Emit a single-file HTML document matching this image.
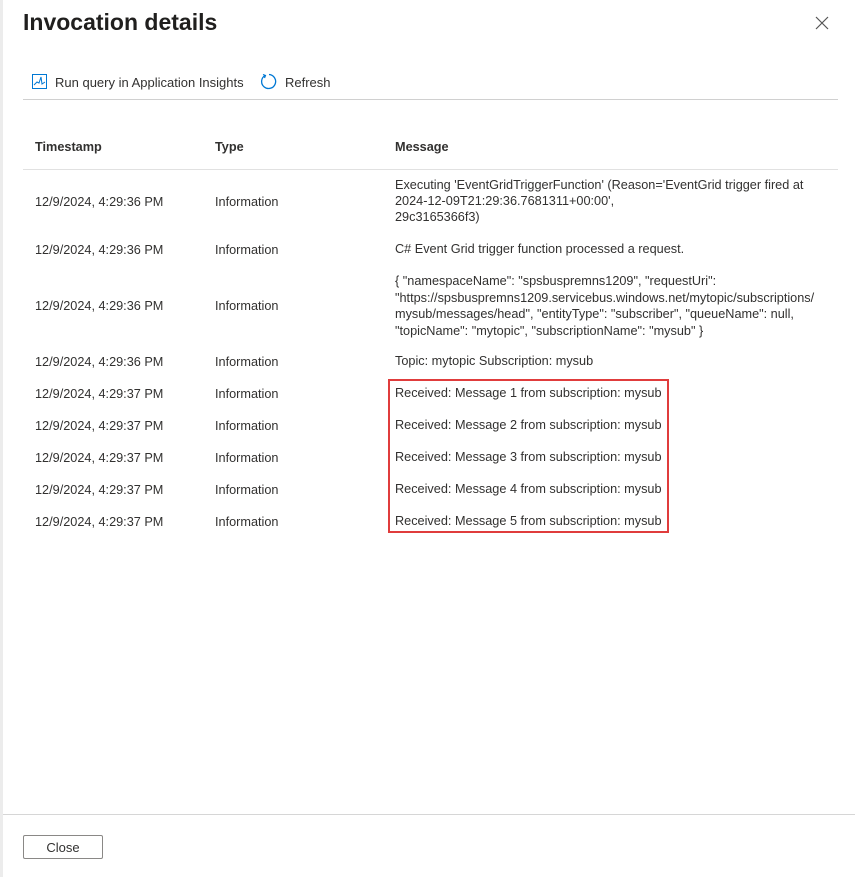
<!DOCTYPE html>
<html><head><meta charset="utf-8"><style>
*{margin:0;padding:0;box-sizing:border-box}
body{width:855px;height:877px;background:#fff;position:relative;overflow:hidden;font-family:"Liberation Sans",sans-serif;color:#323130;font-size:12.7px}
.a{position:absolute;white-space:nowrap}
.t{line-height:16px}
</style></head><body>
<div class="a" style="left:0;top:0;width:3px;height:877px;background:#ececec"></div>
<div class="a" style="left:23px;top:9px;font-size:23px;font-weight:bold;color:#201f1e">Invocation details</div>
<svg class="a" style="left:815px;top:16px" width="14" height="14" viewBox="0 0 14 14"><path d="M1 1L13 13M13 1L1 13" stroke="#555" stroke-width="1.2"/></svg>
<svg class="a" style="left:32px;top:74px" width="15" height="15" viewBox="0 0 15 15"><rect x="0.5" y="0.5" width="14" height="14" fill="none" stroke="#0078d4"/><path d="M2 11L5 8L7 9L9 3L10 10L13 8" fill="none" stroke="#0078d4"/></svg>
<div class="a" style="left:55px;top:75px;font-size:13px">Run query in Application Insights</div>
<svg class="a" style="left:260px;top:73px" width="17" height="17" viewBox="0 0 17 17"><path d="M5 2.5A7 7 0 1 0 9 1.5" fill="none" stroke="#0078d4" stroke-width="1.3"/><path d="M3 1.5L5.5 2.5L4.5 5" fill="none" stroke="#0078d4" stroke-width="1.2"/></svg>
<div class="a" style="left:285px;top:75px;font-size:13px">Refresh</div>
<div class="a" style="left:23px;top:99px;width:815px;height:1px;background:#d0d0d0"></div>
<div class="a" style="left:35px;top:140px;font-weight:bold">Timestamp</div>
<div class="a" style="left:215px;top:140px;font-weight:bold">Type</div>
<div class="a" style="left:395px;top:140px;font-weight:bold">Message</div>
<div class="a" style="left:23px;top:169px;width:815px;height:1px;background:#e1e1e1"></div>

<div class="a" style="left:35px;top:195px">12/9/2024, 4:29:36 PM</div><div class="a" style="left:215px;top:195px">Information</div>
<div class="a t" style="left:395px;top:177px">Executing 'EventGridTriggerFunction' (Reason='EventGrid trigger fired at<br>2024-12-09T21:29:36.7681311+00:00',<br>29c3165366f3)</div>
<div class="a" style="left:35px;top:243px">12/9/2024, 4:29:36 PM</div><div class="a" style="left:215px;top:243px">Information</div>
<div class="a t" style="left:395px;top:241px">C# Event Grid trigger function processed a request.</div>
<div class="a" style="left:35px;top:299px">12/9/2024, 4:29:36 PM</div><div class="a" style="left:215px;top:299px">Information</div>
<div class="a t" style="left:395px;top:273px;line-height:16.5px">{ "namespaceName": "spsbuspremns1209", "requestUri":<br>"https://spsbuspremns1209.servicebus.windows.net/mytopic/subscriptions/<br>mysub/messages/head", "entityType": "subscriber", "queueName": null,<br>"topicName": "mytopic", "subscriptionName": "mysub" }</div>
<div class="a" style="left:35px;top:355px">12/9/2024, 4:29:36 PM</div><div class="a" style="left:215px;top:355px">Information</div>
<div class="a t" style="left:395px;top:353px">Topic: mytopic Subscription: mysub</div>

<div class="a" style="left:35px;top:387px">12/9/2024, 4:29:37 PM</div><div class="a" style="left:215px;top:387px">Information</div>
<div class="a t" style="left:395px;top:385px">Received: Message 1 from subscription: mysub</div>
<div class="a" style="left:35px;top:419px">12/9/2024, 4:29:37 PM</div><div class="a" style="left:215px;top:419px">Information</div>
<div class="a t" style="left:395px;top:417px">Received: Message 2 from subscription: mysub</div>
<div class="a" style="left:35px;top:451px">12/9/2024, 4:29:37 PM</div><div class="a" style="left:215px;top:451px">Information</div>
<div class="a t" style="left:395px;top:449px">Received: Message 3 from subscription: mysub</div>
<div class="a" style="left:35px;top:483px">12/9/2024, 4:29:37 PM</div><div class="a" style="left:215px;top:483px">Information</div>
<div class="a t" style="left:395px;top:481px">Received: Message 4 from subscription: mysub</div>
<div class="a" style="left:35px;top:515px">12/9/2024, 4:29:37 PM</div><div class="a" style="left:215px;top:515px">Information</div>
<div class="a t" style="left:395px;top:513px">Received: Message 5 from subscription: mysub</div>
<div class="a" style="left:388px;top:379px;width:281px;height:154px;border:2px solid #e03c3c"></div>

<div class="a" style="left:3px;top:814px;width:852px;height:1px;background:#d6d6d6"></div>
<div class="a" style="left:23px;top:835px;width:80px;height:24px;border:1px solid #8a8886;border-radius:2px;text-align:center;line-height:24px;font-size:13px">Close</div>
</body></html>
